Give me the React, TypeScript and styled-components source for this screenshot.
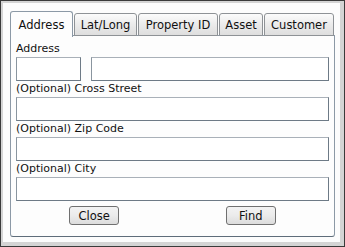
import styled, { createGlobalStyle } from "styled-components";

const GlobalStyle = createGlobalStyle`
  body {
    margin: 0;
    font-family: "DejaVu Sans", Verdana, sans-serif;
    font-size: 11px;
    color: #111;
  }
`;

const Window = styled.div`
  width: 345px;
  height: 247px;
  box-sizing: border-box;
  border: 1px solid #3a3a3a;
`;

const Frame = styled.div`
  height: 100%;
  box-sizing: border-box;
  border-style: solid;
  border-color: #d4d4d4;
  border-width: 2px 4px 4px 2px;
  background: #fcfcfc;
  padding: 7px 0 0 7px;
`;

const TabBar = styled.div`
  display: flex;
  align-items: flex-end;
  height: 26px;
  position: relative;
  z-index: 1;
`;

const Tab = styled.div<{ $active?: boolean; $w: number }>`
  box-sizing: border-box;
  width: ${(p) => p.$w}px;
  height: ${(p) => (p.$active ? 26 : 23)}px;
  margin-right: 1px;
  margin-bottom: ${(p) => (p.$active ? -1 : 0)}px;
  border: 1px solid ${(p) => (p.$active ? "#8c99a6" : "#8e9296")};
  border-bottom: ${(p) => (p.$active ? "none" : "1px solid #8e9296")};
  border-radius: 3px 3px 0 0;
  background: ${(p) =>
    p.$active ? "#fdfdfd" : "linear-gradient(#fbfbfb, #ebebeb 50%, #dedede)"};
  display: flex;
  align-items: center;
  justify-content: center;
  padding-top: ${(p) => (p.$active ? 0 : 1)}px;
  font-size: 11.5px;
  white-space: nowrap;
`;

const Panel = styled.div`
  width: 325px;
  height: 202px;
  box-sizing: border-box;
  border: 1px solid #8c99a6;
  border-bottom-color: #5f6d7a;
  border-radius: 0 0 3px 3px;
  background: #fdfdfd;
  padding: 5px 5px 0 5px;
  margin-top: -1px;
`;

const Label = styled.div`
  height: 16px;
  line-height: 16px;
  font-size: 11px;
  white-space: nowrap;
`;

const Row = styled.div`
  display: flex;
  gap: 10px;
  width: 313px;
`;

const Input = styled.input<{ $w?: number }>`
  box-sizing: border-box;
  height: 24px;
  width: ${(p) => (p.$w ? `${p.$w}px` : "100%")};
  flex: ${(p) => (p.$w ? "none" : "1")};
  margin: 0;
  padding: 0 3px;
  border: 1px solid;
  border-color: #a9b0b8 #6d7a86 #6d7a86 #8a959f;
  background: #fff;
  font: inherit;
  outline: none;
`;

const Buttons = styled.div`
  display: grid;
  grid-template-columns: 1fr 1fr;
  width: 313px;
  margin-top: 5px;
  justify-items: center;
`;

const Button = styled.button`
  box-sizing: border-box;
  width: 50px;
  height: 19px;
  margin: 0;
  padding: 0;
  border: 1px solid #707070;
  border-radius: 3px;
  background: linear-gradient(#f3f3f3, #ebebeb 50%, #dcdcdc);
  font-family: inherit;
  font-size: 11.5px;
  color: #111;
`;

export default function App() {
  return (
    <>
      <GlobalStyle />
      <Window>
        <Frame>
          <TabBar>
            <Tab $active $w={63}>Address</Tab>
            <Tab $w={63}>Lat/Long</Tab>
            <Tab $w={80}>Property ID</Tab>
            <Tab $w={44}>Asset</Tab>
            <Tab $w={70}>Customer</Tab>
          </TabBar>
          <Panel>
            <Label>Address</Label>
            <Row>
              <Input $w={65} />
              <Input />
            </Row>
            <Label>(Optional) Cross Street</Label>
            <Row>
              <Input />
            </Row>
            <Label>(Optional) Zip Code</Label>
            <Row>
              <Input />
            </Row>
            <Label>(Optional) City</Label>
            <Row>
              <Input />
            </Row>
            <Buttons>
              <Button>Close</Button>
              <Button>Find</Button>
            </Buttons>
          </Panel>
        </Frame>
      </Window>
    </>
  );
}
